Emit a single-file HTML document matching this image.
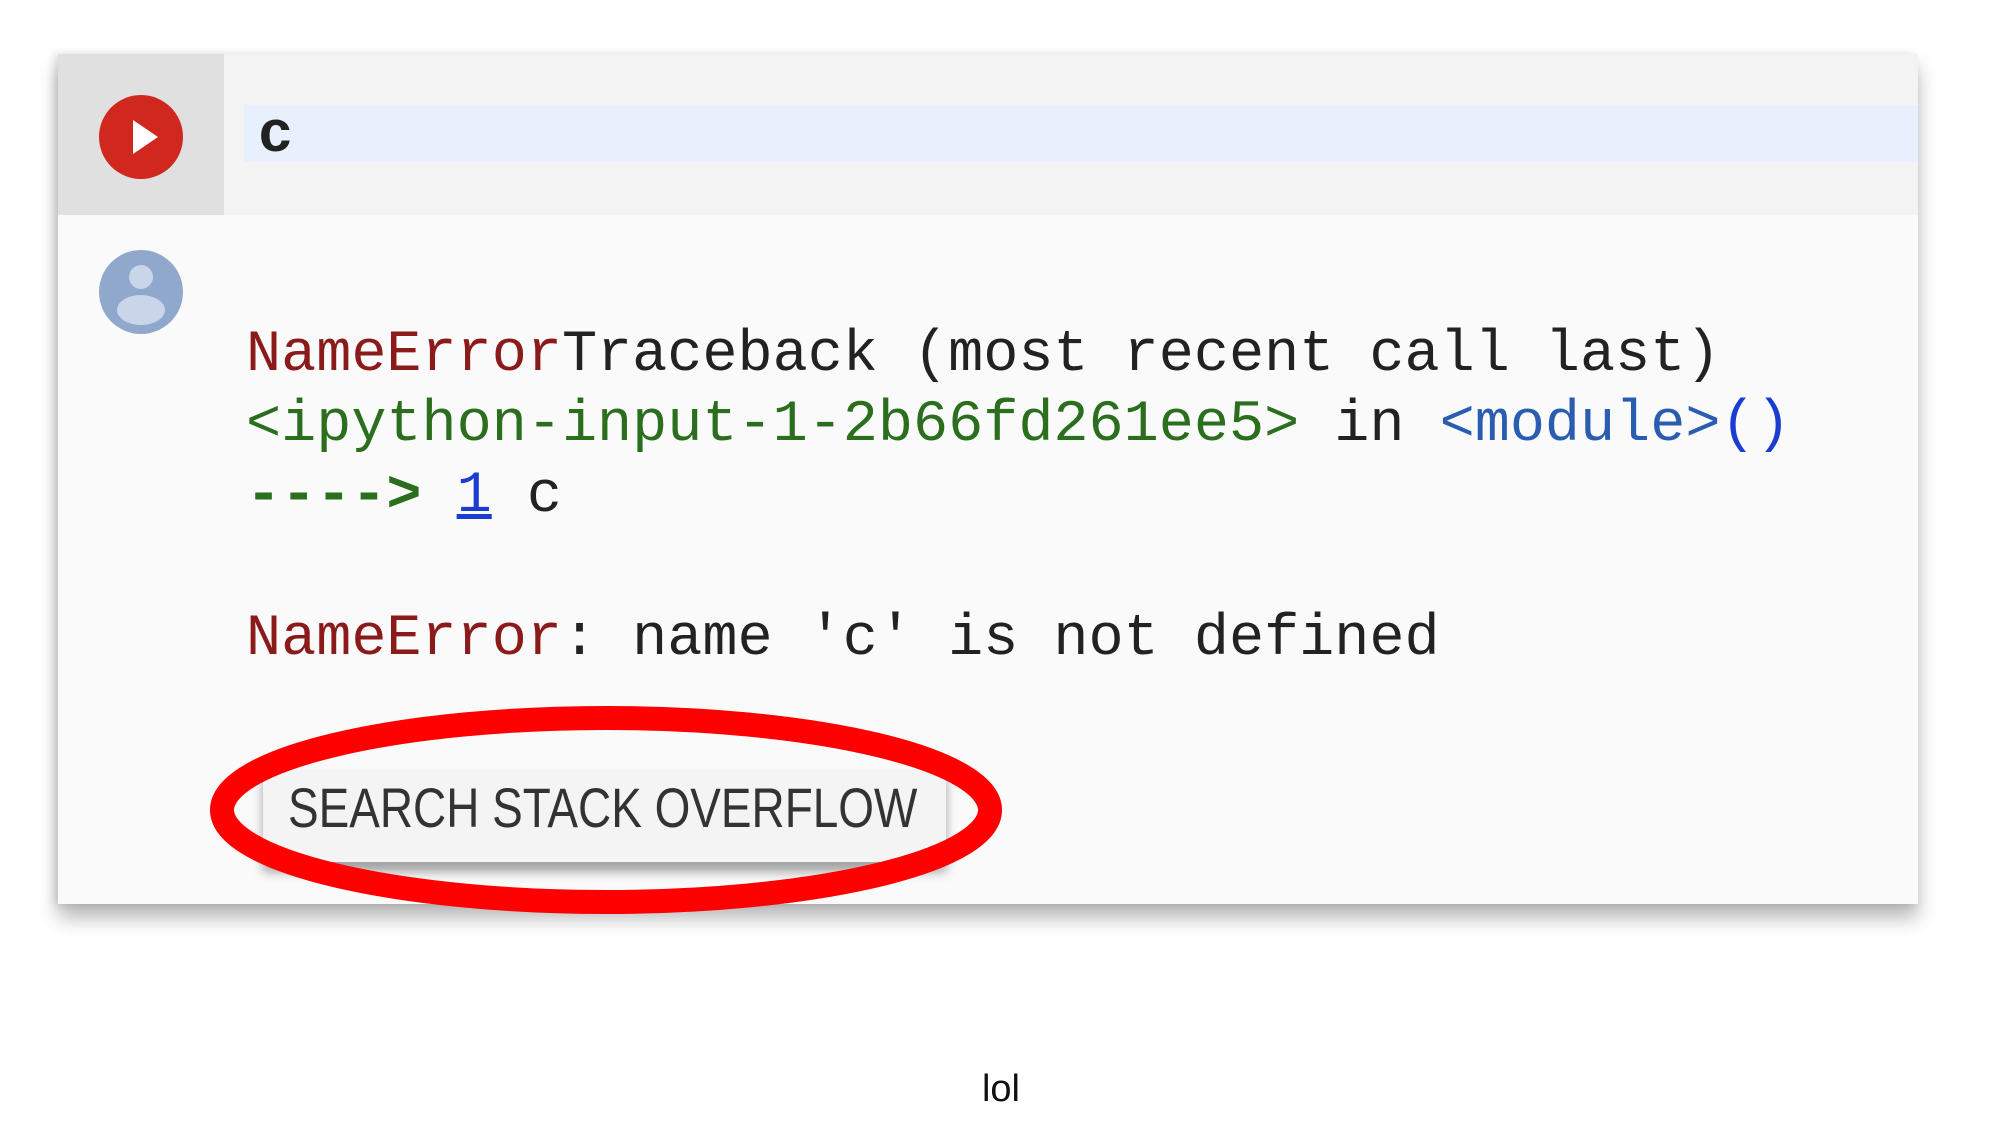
<!DOCTYPE html>
<html><head><style>
html,body{margin:0;padding:0;width:2000px;height:1125px;background:#fff;overflow:hidden;position:relative;font-family:"Liberation Sans",sans-serif}
.card{position:absolute;left:58px;top:54px;width:1860px;height:850px;background:#fafafa;box-shadow:0 14px 18px rgba(0,0,0,.28),-4px 0 8px rgba(0,0,0,.12)}
.top{position:absolute;left:0;top:0;width:1860px;height:161px;background:#f3f3f3}
.gut{position:absolute;left:0;top:0;width:166px;height:161px;background:#e0e0e0}
.inp{position:absolute;left:186px;top:51px;width:1674px;height:57px;background:#e8f0fe}
.mono{font-family:"Liberation Mono",monospace;font-size:58.5px;position:absolute;white-space:pre;left:246px;color:#222}
.r{color:#8b1a1a}.g{color:#2b6e1e}.b{color:#2a5db0}
.btn{position:absolute;left:205px;top:715px;width:683px;height:93px;background:#f4f4f4;box-shadow:0 10px 10px rgba(0,0,0,.35)}
.btn span{position:absolute;left:25px;top:6px;font-size:56px;color:#333;transform:scaleX(.82);transform-origin:left;white-space:nowrap}
</style></head><body>
<div class="card">
 <div class="top"></div><div class="gut"></div><div class="inp"></div>
 <div class="btn"><span>SEARCH STACK OVERFLOW</span></div>
</div>
<svg style="position:absolute;left:0;top:0" width="2000" height="1125">
 <circle cx="141" cy="137" r="42" fill="#d0281e"/>
 <polygon points="133,120 133,154 158,137" fill="#fff"/>
 <circle cx="141" cy="292" r="42" fill="#8fa8cb"/>
 <circle cx="141" cy="277" r="12" fill="#c9d5e8"/>
 <ellipse cx="607" cy="310" rx="0" ry="0" fill="none"/>
 <ellipse cx="141" cy="310" rx="24" ry="15" fill="#c9d5e8"/>
 <ellipse cx="606" cy="810" rx="384" ry="92" fill="none" stroke="#f00" stroke-width="24"/>
</svg>
<div class="mono" style="left:258px;top:102px;font-weight:bold">c</div>
<div class="mono" style="top:321px"><span class="r">NameError</span>Traceback (most recent call last)</div>
<div class="mono" style="top:391px"><span class="g">&lt;ipython-input-1-2b66fd261ee5&gt;</span> in <span class="b">&lt;module&gt;</span><span style="color:#1a3cd0">()</span></div>
<div class="mono" style="top:462px"><span class="g" style="font-weight:bold">----&gt;</span> <span style="color:#1a3cd0;text-decoration:underline">1</span> c</div>
<div class="mono" style="top:605px"><span class="r">NameError</span>: name 'c' is not defined</div>
<div style="position:absolute;left:0;width:2002px;text-align:center;top:1068px;font-size:38px;color:#111">lol</div>
</body></html>
